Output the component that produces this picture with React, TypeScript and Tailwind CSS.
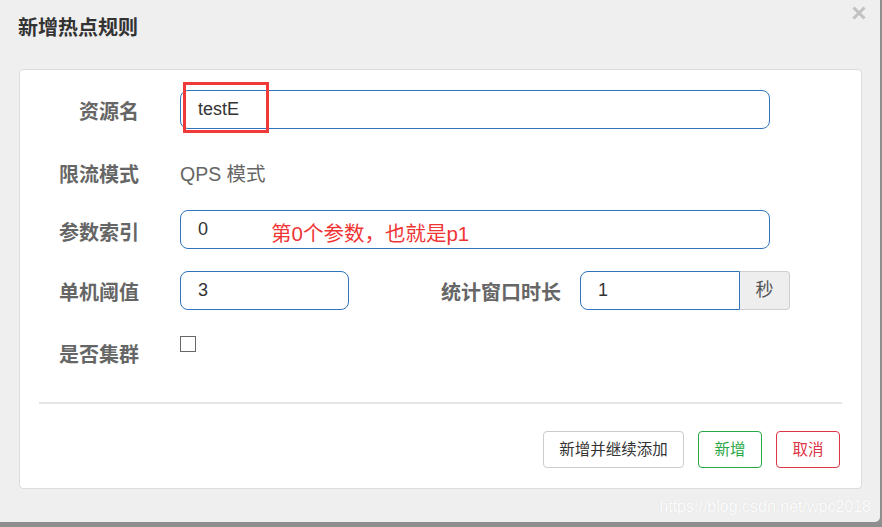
import React from 'react';

const FONT = "font-['Liberation_Sans','Noto_Sans_CJK_SC',sans-serif]";

const Label = ({ text, w = 'w-[119px]', pt = 'pt-[6px]' }: { text: string; w?: string; pt?: string }) => (
    <div className={`${w} ${pt} shrink-0 text-right text-[20px] font-bold text-[#666]`}>{text}</div>
);

const App = () => {
    return (
        <div className={`h-[527px] w-[882px] bg-[#8e8e8e] ${FONT}`}>
            <div className="flex h-[522px] w-[880px] flex-col rounded-br-[5px] bg-[#efefef]">
                {/* header */}
                <div className="flex h-[69px] items-start justify-between pl-[18px] pr-[14px]">
                    <div className="mt-[16px] text-[20px] font-bold leading-[24px] text-[#333]">新增热点规则</div>
                    <svg className="mt-[6px]" width="14" height="14" viewBox="0 0 14 14">
                        <path d="M1.5 1.5 L12.5 12.5 M12.5 1.5 L1.5 12.5" stroke="#c2c2c2" strokeWidth="3" />
                    </svg>
                </div>

                {/* card */}
                <div className="relative ml-[19px] w-[843px] rounded-[4px] border border-[#dcdcdc] bg-white pt-[20px] pb-[20px]">
                    {/* row: 资源名 */}
                    <div className="flex h-[39px] items-center">
                        <Label text="资源名" pt="pt-[5px]" />
                        <div className="ml-[41px] flex h-[39px] w-[590px] items-center rounded-[8px] border border-[#2f75bd] pl-[17px] text-[18px] text-[#333]">
                            testE
                        </div>
                    </div>

                    {/* row: 限流模式 */}
                    <div className="mt-[26px] flex h-[39px] items-center">
                        <Label text="限流模式" pt="pt-0" />
                        <div className="ml-[41px] text-[19.5px] text-[#666]">QPS 模式</div>
                    </div>

                    {/* row: 参数索引 */}
                    <div className="mt-[16px] flex h-[39px] items-center">
                        <Label text="参数索引" />
                        <div className="ml-[41px] flex h-[39px] w-[590px] items-center rounded-[8px] border border-[#2f75bd] pl-[17px] text-[18px] text-[#333]">
                            <span>0</span>
                            <span className="ml-[63px] mt-[9px] text-[20.5px] text-[#f03535]">第0个参数，也就是p1</span>
                        </div>
                    </div>

                    {/* row: 单机阈值 / 统计窗口时长 */}
                    <div className="mt-[22px] flex h-[39px] items-center">
                        <Label text="单机阈值" pt="pt-[5px]" />
                        <div className="ml-[41px] flex h-[39px] w-[169px] items-center rounded-[8px] border border-[#2f75bd] pl-[17px] text-[18px] text-[#333]">
                            3
                        </div>
                        <Label text="统计窗口时长" w="w-[212px]" pt="pt-[5px]" />
                        <div className="ml-[19px] flex h-[39px]">
                            <div className="flex w-[160px] items-center rounded-l-[8px] border border-[#2f75bd] pl-[17px] text-[18px] text-[#333]">
                                1
                            </div>
                            <div className="flex w-[50px] items-center justify-center rounded-r-[4px] border border-l-0 border-[#cfcfcf] bg-[#eeeeee] text-[18px] text-[#555]">
                                秒
                            </div>
                        </div>
                    </div>

                    {/* row: 是否集群 */}
                    <div className="mt-[25px] flex h-[39px] items-center">
                        <Label text="是否集群" pt="pt-[1px]" />
                        <div className="ml-[41px] mb-[21px] h-[16px] w-[16px] border border-[#666] bg-white" />
                    </div>

                    <div className="mx-[19px] mt-[28px] h-[2px] bg-[#e5e5e5]" />

                    {/* buttons */}
                    <div className="mt-[27px] flex justify-end gap-[14px] pr-[21px]">
                        <button className="flex h-[37px] w-[141px] items-center justify-center rounded-[4px] border border-[#cccccc] bg-white text-[15.5px] text-[#333]">
                            新增并继续添加
                        </button>
                        <button className="flex h-[37px] w-[64px] items-center justify-center rounded-[4px] border border-[#28a745] bg-white text-[15.5px] text-[#28a745]">
                            新增
                        </button>
                        <button className="flex h-[37px] w-[64px] items-center justify-center rounded-[4px] border border-[#dc3545] bg-white text-[15.5px] text-[#dc3545]">
                            取消
                        </button>
                    </div>

                    {/* red annotation box */}
                    <div className="absolute left-[163px] top-[12px] h-[51px] w-[86px] border-[3px] border-[#f03a3a]" />
                </div>

                {/* watermark */}
                <div className="mt-[8px] flex justify-end pr-[9px]">
                    <span className="text-[16px] leading-[20px] text-[#fcfcfc] [text-shadow:0_0_1px_#d6d6d6]">
                        https://blog.csdn.net/wpc2018
                    </span>
                </div>
            </div>
        </div>
    );
};

export default App;
